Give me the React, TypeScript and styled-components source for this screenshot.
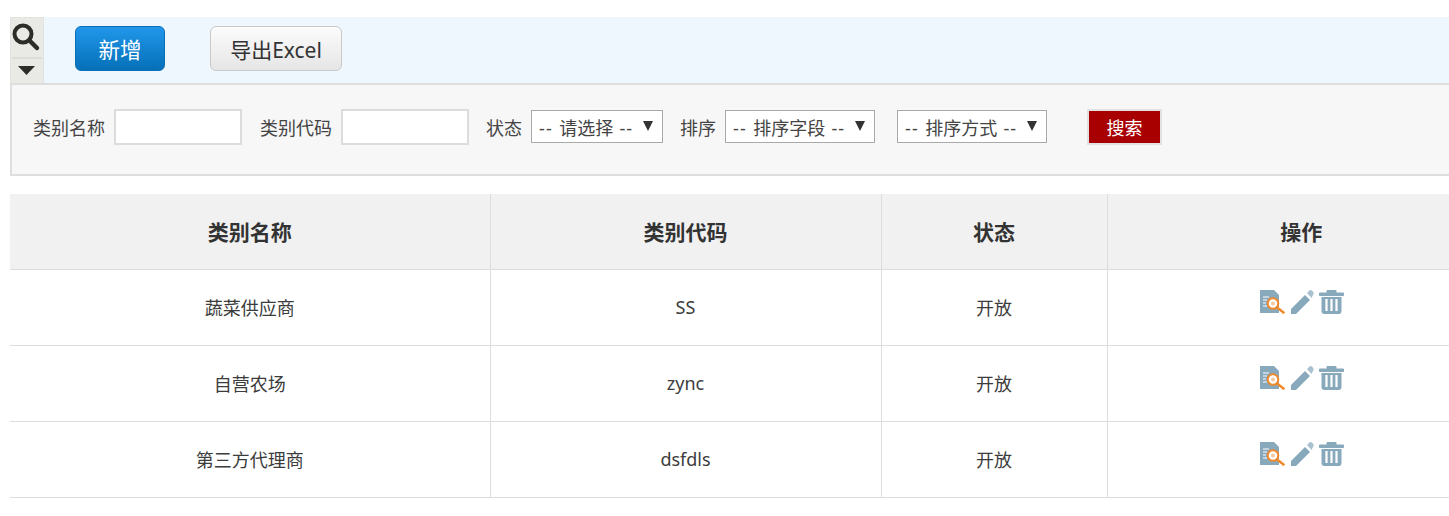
import React from "react";
import styled, { createGlobalStyle } from "styled-components";

const Global = createGlobalStyle`
  html, body { margin: 0; padding: 0; background: #fff; overflow: hidden; }
  body { font-family: "Noto Sans", "Noto Sans CJK SC", sans-serif; color: #333; }
`;

const Page = styled.div`
  width: 1485px;
  margin: 0 0 0 10px;
  padding-top: 17px;
`;

const Toolbar = styled.div`
  display: flex;
  align-items: center;
  height: 66px;
  background: #eef6fe;
`;

const SearchToggle = styled.div`
  width: 34px;
  height: 66px;
  box-sizing: border-box;
  background: #e9e9e6;
  border: 1px solid #e2e2de;
  border-bottom: none;
  display: flex;
  flex-direction: column;
  flex-shrink: 0;
`;

const ToggleCell = styled.div<{ $h: number }>`
  height: ${(p) => p.$h}px;
  padding-right: 1px;
  display: flex;
  align-items: center;
  justify-content: center;
`;

const ToggleDivider = styled.div`
  height: 2px;
  margin: 0 1px;
  background: #dcdcd8;
`;

const PrimaryButton = styled.button`
  width: 90px;
  height: 45px;
  margin: 0 0 3px 31px;
  padding: 0;
  border: 1px solid #0a6fb8;
  border-radius: 6px;
  background: linear-gradient(#2197ea, #0570b8);
  color: #fff;
  font: 21.5px "Noto Sans", "Noto Sans CJK SC", sans-serif;
`;

const SecondaryButton = styled.button`
  width: 132px;
  height: 45px;
  margin: 0 0 3px 45px;
  padding: 0;
  border: 1px solid #c9c9c9;
  border-radius: 6px;
  background: linear-gradient(#fbfbfb, #e6e6e6);
  color: #333;
  font: 21px "Noto Sans", "Noto Sans CJK SC", sans-serif;
`;

const FilterBox = styled.div`
  height: 93px;
  box-sizing: border-box;
  background: #f7f7f7;
  border: 2px solid #dedede;
  display: flex;
  align-items: center;
  padding: 0 0 6px 21px;
  font-size: 18px;
  color: #444;
`;

const FieldLabel = styled.span<{ $gap?: number }>`
  margin-right: ${(p) => p.$gap ?? 9}px;
  white-space: nowrap;
`;

const TextInput = styled.div<{ $after: number }>`
  width: 128px;
  height: 36px;
  box-sizing: border-box;
  background: #fff;
  border: 2px solid #dcdcdc;
  margin-right: ${(p) => p.$after}px;
`;

const Select = styled.div<{ $w: number; $after: number }>`
  width: ${(p) => p.$w}px;
  height: 33px;
  box-sizing: border-box;
  background: #fff;
  border: 1px solid #a9a9a9;
  margin-right: ${(p) => p.$after}px;
  padding: 0 0 0 7px;
  display: flex;
  align-items: center;
  justify-content: space-between;
  font-size: 18px;
  color: #444;
  white-space: nowrap;
`;

const SelectText = styled.span`
  white-space: pre;
  word-spacing: 1.5px;
`;

const Dashes = styled.span`
  letter-spacing: 1.2px;
`;

const Caret = styled.span`
  width: 0;
  height: 0;
  margin: 0 9px 2px 0;
  flex-shrink: 0;
  border-left: 5px solid transparent;
  border-right: 5px solid transparent;
  border-top: 10px solid #333;
`;

const SearchButton = styled.button`
  width: 75px;
  height: 36px;
  padding: 0;
  box-sizing: border-box;
  background: #a80000;
  border: 2px solid #e2e2e2;
  color: #fff;
  font: 18px "Noto Sans", "Noto Sans CJK SC", sans-serif;
`;

const Table = styled.table`
  width: 1485px;
  margin-top: 18px;
  border-collapse: collapse;
  table-layout: fixed;
`;

const HeadCell = styled.th<{ $w: number }>`
  width: ${(p) => p.$w}px;
  height: 75px;
  box-sizing: border-box;
  padding: 0 0 1px;
  background: #f1f1f1;
  border-bottom: 1px solid #dddddd;
  border-left: 1px solid #dddddd;
  font-size: 21px;
  font-weight: 700;
  color: #333;
  &:first-child { border-left: none; }
`;

const BodyCell = styled.td`
  height: 76px;
  box-sizing: border-box;
  padding: 0;
  text-align: center;
  border-bottom: 1px solid #dddddd;
  border-left: 1px solid #dddddd;
  font-size: 18px;
  color: #3c3c3c;
  &:first-child { border-left: none; }
`;

const Actions = styled.div`
  display: flex;
  justify-content: center;
  align-items: center;
  gap: 5px;
  margin: 0 0 11px 1px;
`;

const SearchIcon = () => (
  <svg width="30" height="30" viewBox="0 0 30 30">
    <circle cx="11" cy="11" r="8.5" fill="none" stroke="#2c2c28" strokeWidth="4" />
    <path d="M17.5 17.5 L25 25" stroke="#2c2c28" strokeWidth="4.5" strokeLinecap="round" />
  </svg>
);

const DownIcon = () => (
  <svg width="17" height="10" viewBox="0 0 17 10">
    <path d="M0 0 H17 L8.5 9 Z" fill="#2c2c28" />
  </svg>
);

const ViewIcon = () => (
  <svg width="25" height="26" viewBox="0 0 25 26">
    <path d="M0 1 H14 L19 6 V24 H0 Z" fill="#88a9bc" />
    <path d="M3 8 H9 M3 11 H7 M3 14 H6 M3 17 H7" stroke="#fff" strokeWidth="1.2" />
    <circle cx="13" cy="14.5" r="5.3" fill="#fff" stroke="#f08a2c" strokeWidth="2" />
    <circle cx="13" cy="14.5" r="2" fill="#f6c9a0" />
    <path d="M17 18.5 L23.5 23.5" stroke="#f08a2c" strokeWidth="2.6" strokeLinecap="round" />
  </svg>
);

const EditIcon = () => (
  <svg width="24" height="26" viewBox="0 0 24 26">
    <path d="M1 20 L15 6 L20 11 L6 25 L1 25 Z" fill="#88a9bc" />
    <path d="M17 4 L19.5 1.5 Q21 0.5 22.5 2 L23.5 3.5 Q24 5 23 6 L21.5 9 Z" fill="#a9c1cf" />
  </svg>
);

const TrashIcon = () => (
  <svg width="25" height="26" viewBox="0 0 25 26">
    <path d="M0.5 4 H24.5 V6.5 H0.5 Z M8 4 V1.5 H17 V4" fill="#88a9bc" stroke="#88a9bc" strokeWidth="1" />
    <path d="M2.5 8 H22.5 V22 Q22.5 25 19.5 25 H5.5 Q2.5 25 2.5 22 Z" fill="#88a9bc" />
    <path d="M7.5 10 V22 M12.5 10 V22 M17.5 10 V22" stroke="#fff" strokeWidth="2.2" />
  </svg>
);

const rows = [
  { name: "蔬菜供应商", code: "SS" },
  { name: "自营农场", code: "zync" },
  { name: "第三方代理商", code: "dsfdls" },
];

const SelectLabel = ({ text }: { text: string }) => (
  <SelectText>
    <Dashes>--</Dashes> {text} <Dashes>--</Dashes>
  </SelectText>
);

export default function App() {
  return (
    <Page>
      <Global />
      <Toolbar>
        <SearchToggle>
          <ToggleCell $h={39}><SearchIcon /></ToggleCell>
          <ToggleDivider />
          <ToggleCell $h={24}><DownIcon /></ToggleCell>
        </SearchToggle>
        <PrimaryButton>新增</PrimaryButton>
        <SecondaryButton>导出Excel</SecondaryButton>
      </Toolbar>
      <FilterBox>
        <FieldLabel>类别名称</FieldLabel>
        <TextInput $after={18} />
        <FieldLabel>类别代码</FieldLabel>
        <TextInput $after={17} />
        <FieldLabel>状态</FieldLabel>
        <Select $w={132} $after={17}><SelectLabel text="请选择" /><Caret /></Select>
        <FieldLabel>排序</FieldLabel>
        <Select $w={150} $after={22}><SelectLabel text="排序字段" /><Caret /></Select>
        <Select $w={150} $after={40}><SelectLabel text="排序方式" /><Caret /></Select>
        <SearchButton>搜索</SearchButton>
      </FilterBox>
      <Table>
        <thead>
          <tr>
            <HeadCell $w={480}>类别名称</HeadCell>
            <HeadCell $w={391}>类别代码</HeadCell>
            <HeadCell $w={226}>状态</HeadCell>
            <HeadCell $w={388}>操作</HeadCell>
          </tr>
        </thead>
        <tbody>
          {rows.map((r) => (
            <tr key={r.code}>
              <BodyCell>{r.name}</BodyCell>
              <BodyCell>{r.code}</BodyCell>
              <BodyCell>开放</BodyCell>
              <BodyCell>
                <Actions>
                  <ViewIcon />
                  <EditIcon />
                  <TrashIcon />
                </Actions>
              </BodyCell>
            </tr>
          ))}
        </tbody>
      </Table>
    </Page>
  );
}
